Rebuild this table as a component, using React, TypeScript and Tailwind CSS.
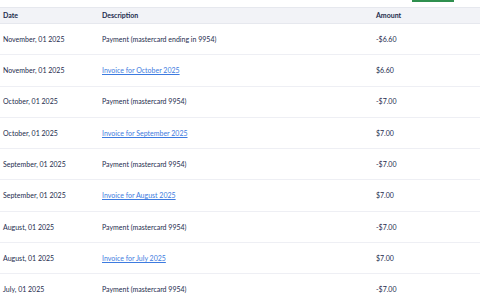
import React from "react";

const rows = [
  { date: "November, 01 2025", desc: "Payment (mastercard ending in 9954)", link: false, amount: "-$6.60" },
  { date: "November, 01 2025", desc: "Invoice for October 2025", link: true, amount: "$6.60" },
  { date: "October, 01 2025", desc: "Payment (mastercard 9954)", link: false, amount: "-$7.00" },
  { date: "October, 01 2025", desc: "Invoice for September 2025", link: true, amount: "$7.00" },
  { date: "September, 01 2025", desc: "Payment (mastercard 9954)", link: false, amount: "-$7.00" },
  { date: "September, 01 2025", desc: "Invoice for August 2025", link: true, amount: "$7.00" },
  { date: "August, 01 2025", desc: "Payment (mastercard 9954)", link: false, amount: "-$7.00" },
  { date: "August, 01 2025", desc: "Invoice for July 2025", link: true, amount: "$7.00" },
  { date: "July, 01 2025", desc: "Payment (mastercard 9954)", link: false, amount: "-$7.00" },
];

export default function App() {
  return (
    <div className="w-[480px] h-[300px] overflow-hidden bg-white text-[#232b4d] font-['Lato','Liberation_Sans',sans-serif] text-[7px]">
      <div className="h-[7px] pl-[412px]">
        <div className="w-[42px] h-[2px] bg-[#2f8f4e]" />
      </div>
      <div className="flex items-center h-[17px] bg-[#f2f3f7] border-y border-[#e6e8ee] font-bold">
        <div className="w-[99px] pl-[3px]">Date</div>
        <div className="w-[274px] pl-[3px]">Description</div>
        <div className="pl-[3px]">Amount</div>
      </div>
      {rows.map((r, i) => (
        <div key={i} className="flex items-center h-[31.3px] border-b-[1.5px] border-[#eeeff4]">
          <div className="w-[99px] pl-[3px]">{r.date}</div>
          <div className="w-[274px] pl-[3px]">
            {r.link ? (
              <span className="text-[#3d7be0] underline">{r.desc}</span>
            ) : (
              r.desc
            )}
          </div>
          <div className="pl-[3px]">{r.amount}</div>
        </div>
      ))}
    </div>
  );
}
